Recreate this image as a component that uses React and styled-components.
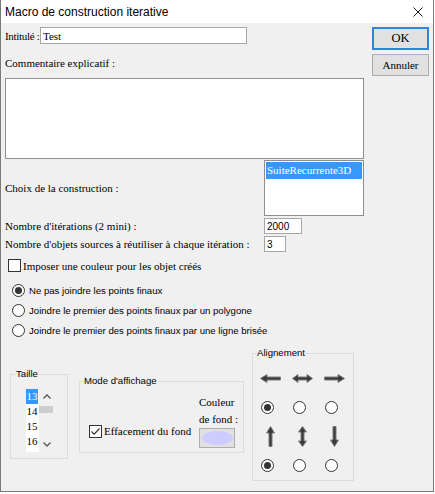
import React from "react";
import styled, { createGlobalStyle } from "styled-components";

const serif = `"Liberation Serif", "Times New Roman", serif`;
const sans = `"Liberation Sans", Arial, sans-serif`;

const GlobalStyle = createGlobalStyle`
  html, body {
    margin: 0;
    padding: 0;
    background: #ffffff;
  }
  * {
    box-sizing: border-box;
  }
`;

const Window = styled.div`
  width: 434px;
  height: 492px;
  border: 1px solid #7a7a7a;
  border-top: none;
  display: flex;
  flex-direction: column;
  background: #f0f0f0;
  font-family: ${serif};
  font-size: 11px;
  color: #000;
`;

const TitleBar = styled.div`
  height: 23px;
  background: #ffffff;
  display: flex;
  align-items: center;
  justify-content: space-between;
  padding: 0 10px 0 4px;
`;

const TitleText = styled.span`
  font-family: ${sans};
  font-size: 12px;
  color: #000;
`;

const Body = styled.div`
  flex: 1;
  padding: 0 4px;
  display: flex;
  flex-direction: column;
`;

const TopArea = styled.div`
  display: flex;
  gap: 8px;
`;

const LeftCol = styled.div`
  width: 359px;
  display: flex;
  flex-direction: column;
`;

const ButtonCol = styled.div`
  display: flex;
  flex-direction: column;
  gap: 4px;
  padding-top: 4px;
`;

const DialogButton = styled.button`
  width: 57px;
  height: ${(p) => (p.$default ? 23 : 22)}px;
  padding: 0;
  background: #e1e1e1;
  border: ${(p) => (p.$default ? "2px solid #2f86d8" : "1px solid #adadad")};
  font-family: ${serif};
  font-size: ${(p) => (p.$default ? 12.5 : 11)}px;
  color: #000;
`;

const FieldRow = styled.div`
  display: flex;
  align-items: center;
  margin-top: ${(p) => p.$mt || 0}px;
`;

const Label = styled.span`
  width: ${(p) => p.$w}px;
  flex: none;
  white-space: nowrap;
  line-height: 14px;
  letter-spacing: ${(p) => p.$tight ? "-0.3px" : "normal"};
`;

const BlockLabel = styled.div`
  margin-top: ${(p) => p.$mt || 0}px;
  line-height: 14px;
`;

const TextInput = styled.input`
  width: ${(p) => p.$w}px;
  height: ${(p) => p.$h}px;
  margin: 0;
  padding: 0 0 0 2px;
  border: 1px solid #a6a6a6;
  background: #ffffff;
  outline: none;
  font-family: ${(p) => (p.$serif ? serif : sans)};
  font-size: ${(p) => (p.$serif ? 11 : 10)}px;
  color: #000;
`;

const CommentArea = styled.div`
  margin-top: 8px;
  width: 359px;
  height: 81px;
  background: #ffffff;
  border: 1px solid #8f8f8f;
`;

const ListBox = styled.div`
  width: 100px;
  height: 56px;
  background: #ffffff;
  border: 1px solid #8f8f8f;
  padding: 1px;
`;

const ListItem = styled.div`
  height: 17px;
  line-height: 17px;
  padding-left: 1px;
  background: ${(p) => (p.$selected ? "#3399ff" : "transparent")};
  color: ${(p) => (p.$selected ? "#ffffff" : "#000")};
  white-space: nowrap;
`;

const CheckRow = styled.label`
  display: flex;
  align-items: center;
  gap: 2px;
  margin-top: ${(p) => p.$mt || 0}px;
  margin-left: ${(p) => p.$ml || 0}px;
  white-space: nowrap;
`;

const CheckBox = styled.span`
  width: 13px;
  height: 13px;
  flex: none;
  border: 1px solid #333333;
  background: #ffffff;
  display: flex;
  align-items: center;
  justify-content: center;
`;

const RadioList = styled.div`
  margin-top: 8px;
  display: flex;
  flex-direction: column;
`;

const RadioRow = styled.div`
  height: 20px;
  display: flex;
  align-items: center;
  gap: 4px;
  padding-left: 7px;
  font-family: ${sans};
  font-size: 9.6px;
  white-space: nowrap;
`;

const Radio = styled.span`
  width: 13px;
  height: 13px;
  flex: none;
  border-radius: 50%;
  border: 1px solid #333333;
  background: #ffffff;
  display: flex;
  align-items: center;
  justify-content: center;

  &::after {
    content: "";
    width: 7px;
    height: 7px;
    border-radius: 50%;
    background: ${(p) => (p.$on ? "#333333" : "transparent")};
  }
`;

const BottomRow = styled.div`
  display: flex;
  align-items: flex-start;
  margin-top: 13px;
  padding-left: 5px;
`;

const Group = styled.div`
  position: relative;
  width: ${(p) => p.$w}px;
  height: ${(p) => p.$h}px;
  margin-top: ${(p) => p.$mt || 0}px;
  margin-left: ${(p) => p.$ml || 0}px;
  border: 1px solid #dcdcdc;
`;

const Caption = styled.span`
  position: absolute;
  top: -7px;
  left: ${(p) => p.$left || 4}px;
  padding: 0 1px 0 0;
  background: #f0f0f0;
  font-family: ${sans};
  font-size: 9.6px;
  line-height: 12px;
  white-space: nowrap;
`;

const SizeBox = styled.div`
  display: flex;
  padding: 14px 0 0 15px;
`;

const SizeList = styled.div`
  width: 13px;
  height: 63px;
  background: #ffffff;
`;

const SizeItem = styled.div`
  height: 15px;
  line-height: 15px;
  width: 12px;
  text-align: center;
  background: ${(p) => (p.$selected ? "#3399ff" : "transparent")};
  color: ${(p) => (p.$selected ? "#ffffff" : "#000")};
`;

const ScrollBar = styled.div`
  width: 14px;
  height: 63px;
  display: flex;
  flex-direction: column;
`;

const ScrollArrow = styled.div`
  height: 15px;
  display: flex;
  align-items: center;
  justify-content: center;
  padding-left: 2px;
`;

const ScrollThumb = styled.div`
  height: 7px;
  margin-top: 2px;
  background: #cdcdcd;
`;

const ScrollSpace = styled.div`
  flex: 1;
`;

const ModeBox = styled.div`
  display: flex;
  padding: 12px 8px 0 9px;
`;

const ColorCol = styled.div`
  margin-left: auto;
  display: flex;
  flex-direction: column;
  width: 36px;
  white-space: nowrap;
  line-height: 17px;
`;

const ColorSwatch = styled.div`
  width: 36px;
  height: 20px;
  background: #e1e1e1;
  border: 1px solid #adadad;
  display: flex;
  align-items: center;
  justify-content: center;

  &::after {
    content: "";
    width: 31px;
    height: 14px;
    border-radius: 50%;
    background: #ccccff;
  }
`;

const AlignGrid = styled.div`
  display: grid;
  grid-template-columns: repeat(3, 32px);
  grid-auto-rows: 29px;
  padding: 10px 0 0 1px;
`;

const ArrowCell = styled.div`
  display: flex;
  align-items: center;
  justify-content: center;
`;

const RadioCell = styled.div`
  display: flex;
  align-items: center;
  padding-left: 7px;
`;

const arrowShapes = {
  left: "0.5,4.5 7,0.5 7,3 20.5,3 20.5,6 7,6 7,8.5",
  right: "20.5,4.5 14,0.5 14,3 0.5,3 0.5,6 14,6 14,8.5",
  both: "0.5,4.5 6,0.5 6,3 15,3 15,0.5 20.5,4.5 15,8.5 15,6 6,6 6,8.5",
};

function Arrow({ dir }) {
  const vertical = dir === "up" || dir === "down" || dir === "vboth";
  const key = dir === "up" ? "left" : dir === "down" ? "right" : dir === "vboth" ? "both" : dir;
  const points = arrowShapes[key];
  if (vertical) {
    const swapped = points
      .split(" ")
      .map((pt) => pt.split(",").reverse().join(","))
      .join(" ");
    return (
      <svg width="9" height="21" viewBox="0 0 9 21">
        <polygon points={swapped} fill="#3a3a3a" stroke="#7c7c7c" strokeWidth="1" />
      </svg>
    );
  }
  return (
    <svg width="21" height="9" viewBox="0 0 21 9">
      <polygon points={points} fill="#3a3a3a" stroke="#7c7c7c" strokeWidth="1" />
    </svg>
  );
}

function CloseIcon() {
  return (
    <svg width="10" height="10" viewBox="0 0 10 10">
      <path d="M0.5 0.5 L9.5 9.5 M9.5 0.5 L0.5 9.5" stroke="#111" strokeWidth="1" />
    </svg>
  );
}

function Chevron({ up }) {
  return (
    <svg width="8" height="5" viewBox="0 0 8 5">
      <polyline
        points={up ? "0.5,4.5 4,1 7.5,4.5" : "0.5,0.5 4,4 7.5,0.5"}
        fill="none"
        stroke="#555"
        strokeWidth="1.3"
      />
    </svg>
  );
}

function Check() {
  return (
    <svg width="11" height="11" viewBox="0 0 11 11">
      <polyline points="1.5,5.5 4.2,8.2 9.5,2.5" fill="none" stroke="#333" strokeWidth="1.2" />
    </svg>
  );
}

const joinOptions = [
  { text: "Ne pas joindre les points finaux", on: true },
  { text: "Joindre le premier des points finaux par un polygone", on: false },
  { text: "Joindre le premier des points finaux par une ligne brisée", on: false },
];

export default function App() {
  return (
    <>
      <GlobalStyle />
      <Window>
        <TitleBar>
          <TitleText>Macro de construction iterative</TitleText>
          <CloseIcon />
        </TitleBar>
        <Body>
          <TopArea>
            <LeftCol>
              <FieldRow $mt={4}>
                <Label $w={35} $tight>Intitulé :</Label>
                <TextInput $w={207} $h={17} $serif readOnly value="Test" />
              </FieldRow>
              <BlockLabel $mt={12}>Commentaire explicatif :</BlockLabel>
              <CommentArea />
              <FieldRow $mt={1}>
                <Label $w={259}>Choix de la construction :</Label>
                <ListBox>
                  <ListItem $selected>SuiteRecurrente3D</ListItem>
                </ListBox>
              </FieldRow>
              <FieldRow $mt={2}>
                <Label $w={259}>Nombre d'itérations (2 mini) :</Label>
                <TextInput $w={38} $h={16} readOnly value="2000" />
              </FieldRow>
              <FieldRow $mt={2}>
                <Label $w={259}>Nombre d'objets sources à réutiliser à chaque itération :</Label>
                <TextInput $w={22} $h={16} readOnly value="3" />
              </FieldRow>
              <CheckRow $mt={7} $ml={3}>
                <CheckBox />
                Imposer une couleur pour les objet créés
              </CheckRow>
              <RadioList>
                {joinOptions.map((o) => (
                  <RadioRow key={o.text}>
                    <Radio $on={o.on} />
                    {o.text}
                  </RadioRow>
                ))}
              </RadioList>
            </LeftCol>
            <ButtonCol>
              <DialogButton $default>OK</DialogButton>
              <DialogButton>Annuler</DialogButton>
            </ButtonCol>
          </TopArea>
          <BottomRow>
            <Group $w={58} $h={85} $mt={21}>
              <Caption $left={5}>Taille</Caption>
              <SizeBox>
                <SizeList>
                  {[13, 14, 15, 16].map((n) => (
                    <SizeItem key={n} $selected={n === 13}>
                      {n}
                    </SizeItem>
                  ))}
                </SizeList>
                <ScrollBar>
                  <ScrollArrow>
                    <Chevron up />
                  </ScrollArrow>
                  <ScrollThumb />
                  <ScrollSpace />
                  <ScrollArrow>
                    <Chevron />
                  </ScrollArrow>
                </ScrollBar>
              </SizeBox>
            </Group>
            <Group $w={165} $h={72} $mt={28} $ml={11}>
              <Caption>Mode d'affichage</Caption>
              <ModeBox>
                <CheckRow $mt={20}>
                  <CheckBox>
                    <Check />
                  </CheckBox>
                  Effacement du fond
                </CheckRow>
                <ColorCol>
                  <span>Couleur</span>
                  <span>de fond :</span>
                  <ColorSwatch />
                </ColorCol>
              </ModeBox>
            </Group>
            <Group $w={102} $h={128} $ml={8}>
              <Caption>Alignement</Caption>
              <AlignGrid>
                <ArrowCell><Arrow dir="left" /></ArrowCell>
                <ArrowCell><Arrow dir="both" /></ArrowCell>
                <ArrowCell><Arrow dir="right" /></ArrowCell>
                <RadioCell><Radio $on /></RadioCell>
                <RadioCell><Radio /></RadioCell>
                <RadioCell><Radio /></RadioCell>
                <ArrowCell><Arrow dir="up" /></ArrowCell>
                <ArrowCell><Arrow dir="vboth" /></ArrowCell>
                <ArrowCell><Arrow dir="down" /></ArrowCell>
                <RadioCell><Radio $on /></RadioCell>
                <RadioCell><Radio /></RadioCell>
                <RadioCell><Radio /></RadioCell>
              </AlignGrid>
            </Group>
          </BottomRow>
        </Body>
      </Window>
    </>
  );
}
